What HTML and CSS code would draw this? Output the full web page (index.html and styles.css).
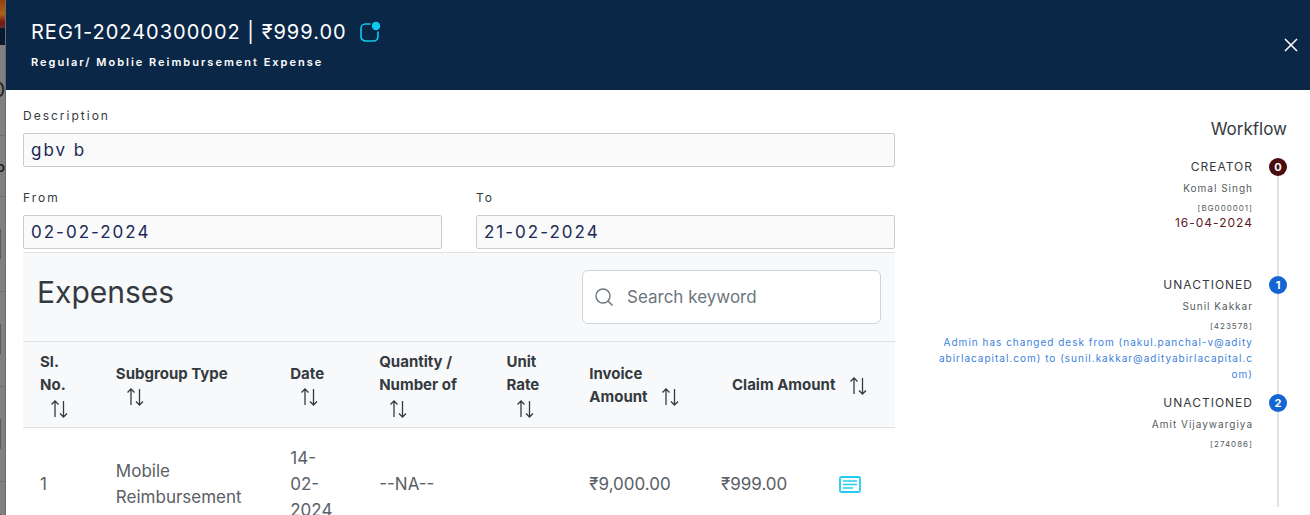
FILE: index.html
```html
<!DOCTYPE html>
<html lang="en">
<head>
    <meta charset="utf-8">
    <meta name="viewport" content="width=device-width, initial-scale=1">
    <title>Expense Details</title>
    <link rel="stylesheet" href="styles.css">
</head>
<body>
    <!-- arrows used by every sortable column -->
    <svg class="sprite" aria-hidden="true">
        <symbol id="sort" viewBox="0 0 18 18">
            <path d="M5 17V1M1.5 4.5 5 1l3.500 3.500M13.500 1v16M10 13.500l3.500 3.500 3.500-3.500" fill="none" stroke="currentColor" stroke-width="1.300"/>
        </symbol>
    </svg>

    <div class="page">
        <!-- dimmed page behind the panel -->
        <div class="backdrop" aria-hidden="true">
            <div class="back-banner"></div>
            <div class="back-nav"></div>
            <div class="back-row back-total">0</div>
            <div class="back-row back-tab">o</div>
            <div class="back-row back-card"></div>
            <div class="back-row back-card"></div>
            <div class="back-row back-card"></div>
            <div class="back-row back-card"></div>
        </div>

        <main class="panel">
            <header class="panel-header">
                <div>
                    <h1 class="title">REG1-20240300002 | ₹999.00
                        <svg class="title-icon" viewBox="0 0 22 22" aria-hidden="true">
                            <path d="M11 3H6.500a4.500 4.500 0 0 0-4.500 4.500v8a4.500 4.500 0 0 0 4.500 4.500h8a4.500 4.500 0 0 0 4.500-4.500V11" fill="none" stroke="currentColor" stroke-width="1.600" stroke-linecap="round"/>
                            <circle cx="17" cy="5" r="4.200" fill="currentColor"/>
                        </svg>
                    </h1>
                    <p class="subtitle">Regular/ Moblie Reimbursement Expense</p>
                </div>
                <button class="close" type="button" aria-label="Close">
                    <svg viewBox="0 0 14 14" aria-hidden="true"><path d="M1 1l12 12M13 1 1 13" stroke="currentColor" stroke-width="1.500"/></svg>
                </button>
            </header>

            <div class="panel-body">
                <section>
                    <form class="details">
                        <div class="field field-wide">
                            <label for="description">Description</label>
                            <input type="text" id="description" value="gbv b" readonly>
                        </div>
                        <div class="field">
                            <label for="from">From</label>
                            <input type="text" id="from" value="02-02-2024" readonly>
                        </div>
                        <div class="field">
                            <label for="to">To</label>
                            <input type="text" id="to" value="21-02-2024" readonly>
                        </div>
                    </form>

                    <div class="table-top">
                        <h2>Expenses</h2>
                        <div class="search">
                            <svg class="search-icon" viewBox="0 0 18 18" aria-hidden="true">
                                <circle cx="8" cy="8" r="7" fill="none" stroke="currentColor" stroke-width="1.400"/>
                                <path d="M13 13l4.500 4.500" stroke="currentColor" stroke-width="1.500"/>
                            </svg>
                            <input type="text" placeholder="Search keyword" aria-label="Search keyword">
                        </div>
                    </div>

                    <table class="expenses">
                        <colgroup>
                            <col class="col-no">
                            <col class="col-type">
                            <col class="col-date">
                            <col class="col-qty">
                            <col class="col-rate">
                            <col class="col-invoice">
                            <col class="col-claim">
                            <col class="col-note">
                        </colgroup>
                        <thead>
                            <tr>
                                <th>Sl. No. <button class="sort" type="button" aria-label="Sort"><svg><use href="#sort"/></svg></button></th>
                                <th>Subgroup Type <button class="sort" type="button" aria-label="Sort"><svg><use href="#sort"/></svg></button></th>
                                <th>Date <button class="sort" type="button" aria-label="Sort"><svg><use href="#sort"/></svg></button></th>
                                <th>Quantity / Number of <button class="sort" type="button" aria-label="Sort"><svg><use href="#sort"/></svg></button></th>
                                <th>Unit Rate <button class="sort" type="button" aria-label="Sort"><svg><use href="#sort"/></svg></button></th>
                                <th>Invoice Amount <button class="sort" type="button" aria-label="Sort"><svg><use href="#sort"/></svg></button></th>
                                <th colspan="2" class="center">Claim Amount <button class="sort" type="button" aria-label="Sort"><svg><use href="#sort"/></svg></button></th>
                            </tr>
                        </thead>
                        <tbody>
                            <tr>
                                <td>1</td>
                                <td>Mobile Reimbursement</td>
                                <td>14-02-2024</td>
                                <td>--NA--</td>
                                <td></td>
                                <td>₹9,000.00</td>
                                <td>₹999.00</td>
                                <td class="center">
                                    <button class="note" type="button" aria-label="Remarks">
                                        <svg viewBox="0 0 22 18" aria-hidden="true">
                                            <rect x="1" y="1" width="20" height="15" rx="1.500" fill="none" stroke="currentColor" stroke-width="1.800"/>
                                            <path d="M4 5h14M4 8.500h14M4 12h10" stroke="currentColor" stroke-width="1.700"/>
                                        </svg>
                                    </button>
                                </td>
                            </tr>
                        </tbody>
                    </table>
                </section>

                <aside class="workflow">
                    <h3>Workflow</h3>
                    <ol class="steps">
                        <li class="step">
                            <div class="step-text">
                                <p class="step-status">CREATOR</p>
                                <p class="step-name">Komal Singh</p>
                                <p class="step-id">[BG000001]</p>
                                <p class="step-date">16-04-2024</p>
                            </div>
                            <span class="badge badge-creator">0</span>
                        </li>
                        <li class="step">
                            <div class="step-text">
                                <p class="step-status">UNACTIONED</p>
                                <p class="step-name">Sunil Kakkar</p>
                                <p class="step-id">[423578]</p>
                                <p class="step-note">Admin has changed desk from (nakul.panchal-v@adityabirlacapital.com) to (sunil.kakkar@adityabirlacapital.com)</p>
                            </div>
                            <span class="badge">1</span>
                        </li>
                        <li class="step">
                            <div class="step-text">
                                <p class="step-status">UNACTIONED</p>
                                <p class="step-name">Amit Vijaywargiya</p>
                                <p class="step-id">[274086]</p>
                            </div>
                            <span class="badge">2</span>
                        </li>
                    </ol>
                </aside>
            </div>
        </main>
    </div>
</body>
</html>
```
FILE: styles.css
```css
* {
    box-sizing: border-box;
}

body {
    margin: 0;
    font-family: Inter, "Liberation Sans", sans-serif;
    color: #343a40;
    background-color: #fff;
}

h1, h2, h3, p, ol {
    margin: 0;
    padding: 0;
    font-weight: 400;
}

button {
    padding: 0;
    border: none;
    background: none;
    color: inherit;
    cursor: pointer;
}

svg {
    display: block;
}

.sprite {
    display: none;
}

.page {
    display: flex;
    height: 100vh;
    overflow: hidden;
}

/* backdrop */
.backdrop {
    width: 6px;
    flex: none;
    overflow: hidden;
    background-color: #808080;
    border-right: 1px solid #6c6c6c;
}

.back-banner {
    height: 28px;
    background: linear-gradient(#9a3a10, #a8641c 50%, #7a1410 80%, #5c3034);
}

.back-nav {
    height: 17px;
    background-color: #061a2c;
}

.back-row {
    display: flex;
    justify-content: flex-end;
    align-items: center;
    height: 95px;
    border-bottom: 1px solid #6e6e6e;
    color: #222;
}

.back-total {
    height: 91px;
    font-size: 20px;
}

.back-tab {
    height: 61px;
    font-size: 14px;
    font-weight: 600;
}

.back-card::before {
    content: "";
    width: 1px;
    height: 30px;
    margin-right: auto;
    background-color: #5c5c5c;
}

/* panel */
.panel {
    flex: 1;
    min-width: 0;
}

.panel-header {
    display: flex;
    justify-content: space-between;
    align-items: center;
    height: 90px;
    padding: 0 12px 0 25px;
    background-color: #0b2747;
    color: #fff;
}

.title {
    display: flex;
    align-items: center;
    gap: 12px;
    padding-top: 2px;
    font-size: 20px;
    line-height: 32px;
    letter-spacing: 1px;
}

.title-icon {
    width: 22px;
    height: 22px;
    color: #0dcaf0;
}

.subtitle {
    font-size: 11px;
    font-weight: 600;
    line-height: 28px;
    letter-spacing: 2px;
}

.close svg {
    width: 14px;
    height: 14px;
}

.panel-body {
    display: grid;
    grid-template-columns: minmax(0, 1fr) 349px;
    gap: 43px;
    padding: 16px 23px 0 17px;
}

/* form */
.details {
    display: grid;
    grid-template-columns: 1fr 1fr;
    gap: 21px 34px;
    padding-bottom: 3px;
}

.field {
    display: flex;
    flex-direction: column;
    gap: 8px;
}

.field-wide {
    grid-column: 1 / -1;
}

.field label {
    font-size: 12px;
    line-height: 19px;
    letter-spacing: 2px;
}

.field input {
    width: 100%;
    height: 34px;
    padding: 0 7px;
    border: 1px solid #ccc;
    border-radius: 2px;
    background-color: #fafafa;
    color: #1b2a57;
    font-family: inherit;
    font-size: 17px;
    letter-spacing: 2px;
}

/* expenses */
.table-top {
    display: flex;
    justify-content: space-between;
    align-items: flex-start;
    padding: 17px 14px;
    border-top: 1px solid #dee2e6;
    background-color: #f8f9fa;
}

.table-top h2 {
    font-size: 30px;
    line-height: 44px;
}

.search {
    display: flex;
    align-items: center;
    gap: 14px;
    width: 299px;
    height: 54px;
    padding: 0 12px;
    border: 1px solid #ced4da;
    border-radius: 6px;
    background-color: #fff;
}

.search-icon {
    flex: none;
    width: 18px;
    height: 18px;
    color: #6c757d;
}

.search input {
    flex: 1;
    min-width: 0;
    padding: 0;
    border: none;
    outline: none;
    font-family: inherit;
    font-size: 17px;
}

.search input::placeholder {
    color: #6c757d;
}

.expenses {
    width: 100%;
    table-layout: fixed;
    border-collapse: collapse;
}

.col-no { width: 8.7%; }
.col-type { width: 20%; }
.col-date { width: 10.2%; }
.col-qty { width: 14.6%; }
.col-rate { width: 9.5%; }
.col-invoice { width: 15.1%; }
.col-claim { width: 11.6%; }
.col-note { width: 10.3%; }

.expenses th {
    padding: 8px 16px 8px 17px;
    border-top: 1px solid #dee2e6;
    border-bottom: 1px solid #dee2e6;
    background-color: #f8f9fa;
    font-size: 15px;
    font-weight: 700;
    line-height: 23px;
    text-align: left;
}

.expenses td {
    padding: 17px;
    color: #5a6066;
    font-size: 17px;
    line-height: 26px;
}

.expenses td:nth-child(3) {
    padding-right: 24px;
}

.expenses .center {
    padding-left: 0;
    padding-right: 0;
    text-align: center;
}

.sort {
    margin-left: 10px;
    vertical-align: middle;
}

.sort svg {
    width: 18px;
    height: 18px;
}

.note {
    color: #22cbf0;
    vertical-align: middle;
}

.note svg {
    width: 22px;
    height: 18px;
}

/* workflow */
.workflow {
    padding-top: 10px;
    text-align: right;
}

.workflow h3 {
    font-size: 17px;
    line-height: 26px;
}

.steps {
    margin-top: 16px;
    list-style: none;
}

.step {
    position: relative;
    display: flex;
    justify-content: flex-end;
    gap: 16px;
    min-height: 118px;
}

.step:last-child {
    min-height: 104px;
}

/* line running behind the badges */
.step::before {
    content: "";
    position: absolute;
    top: 9px;
    right: 8px;
    width: 2px;
    height: 100%;
    background-color: #dee2e6;
}

.step-text {
    flex: 1;
    min-width: 0;
    color: #565c62;
    letter-spacing: 1px;
}

.step-status {
    color: #343a40;
    font-size: 12px;
    line-height: 18px;
}

.step-name {
    font-size: 10px;
    line-height: 24px;
}

.step-id {
    font-size: 8px;
    line-height: 16px;
}

.step-date {
    color: #5c1a1e;
    font-size: 12px;
    line-height: 14px;
}

.step-note {
    color: #3b82dc;
    font-size: 10px;
    line-height: 16px;
    word-break: break-all;
}

.badge {
    position: relative;
    width: 18px;
    height: 18px;
    border-radius: 50%;
    background-color: #1464d2;
    color: #fff;
    font-size: 11px;
    font-weight: 700;
    line-height: 18px;
    text-align: center;
}

.badge-creator {
    background-color: #4a0d10;
}
```
